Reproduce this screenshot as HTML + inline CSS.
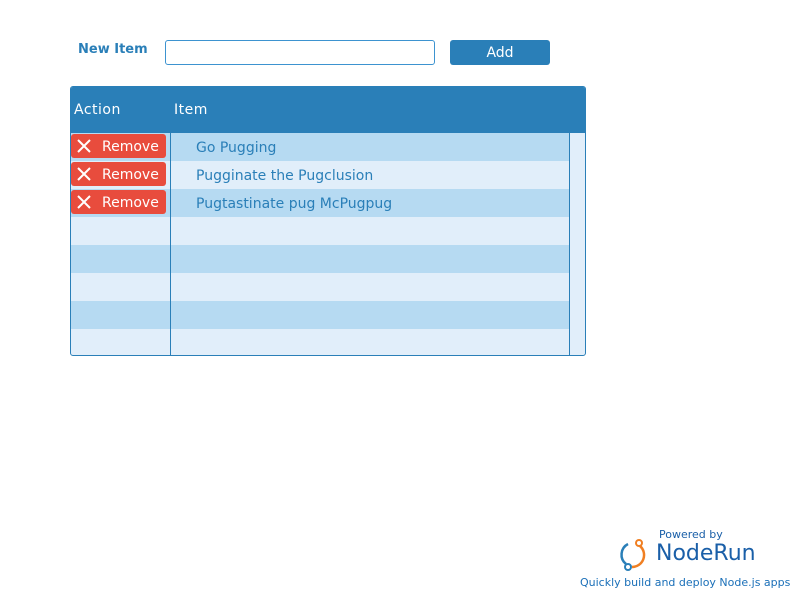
<!DOCTYPE html>
<html><head><style>
body{margin:0;width:800px;height:600px;background:#fff;font-family:"DejaVu Sans","Liberation Sans",sans-serif;position:relative;overflow:hidden}
.a{position:absolute}
.lbl{left:78px;top:42px;font-size:13px;font-weight:bold;color:#2a7fb8}
.inp{left:165px;top:40px;width:268px;height:23px;border:1px solid #3d93d0;border-radius:3px}
.add{left:450px;top:40px;width:100px;height:25px;background:#2a7fb8;border-radius:3px;color:#fff;font-size:14px;text-align:center;line-height:26px}
.tbl{left:70px;top:86px;width:514px;height:268px;border:1px solid #2a7fb8;border-radius:3px;overflow:hidden;background:#e1eefa}
.hd{left:0;top:0;width:516px;height:46px;background:#2a7fb8;color:#fff;font-size:14px;letter-spacing:0.5px}
.row{left:0;width:499px;height:28px}
.d{background:#b6daf2}
.vl{top:46px;width:1px;height:222px;background:#2a7fb8}
.btn{left:0;width:95px;height:24px;background:#e84c3d;border-radius:3px;color:#fff;font-size:14px;line-height:26px}
.btn span{position:absolute;left:31px}
.txt{left:125px;font-size:14px;color:#2a7fb8;line-height:30px}
</style></head><body>
<div class="a lbl">New Item</div>
<div class="a inp"></div>
<div class="a add">Add</div>
<div class="a tbl">
 <div class="a hd"><span class="a" style="left:3px;top:15px">Action</span><span class="a" style="left:103px;top:15px">Item</span></div>
 <div class="a row d" style="top:46px"></div>
 <div class="a row d" style="top:102px"></div>
 <div class="a row d" style="top:158px"></div>
 <div class="a row d" style="top:214px"></div>
 <div class="a vl" style="left:99px"></div>
 <div class="a vl" style="left:498px"></div>
 <div class="a btn" style="top:47px"><svg class="a" style="left:6px;top:5px" width="14" height="14"><path d="M1 1L13 13M13 1L1 13" stroke="#fff" stroke-width="2"/></svg><span>Remove</span></div>
 <div class="a btn" style="top:75px"><svg class="a" style="left:6px;top:5px" width="14" height="14"><path d="M1 1L13 13M13 1L1 13" stroke="#fff" stroke-width="2"/></svg><span>Remove</span></div>
 <div class="a btn" style="top:103px"><svg class="a" style="left:6px;top:5px" width="14" height="14"><path d="M1 1L13 13M13 1L1 13" stroke="#fff" stroke-width="2"/></svg><span>Remove</span></div>
 <div class="a txt" style="top:46px">Go Pugging</div>
 <div class="a txt" style="top:74px">Pugginate the Pugclusion</div>
 <div class="a txt" style="top:102px">Pugtastinate pug McPugpug</div>
</div>
<div class="a" style="left:659px;top:528px;font-size:11px;color:#1a5fa8">Powered by</div>
<svg class="a" style="left:618px;top:536px" width="34" height="36"><path d="M10 8A12 12 0 0 0 8 28" stroke="#2a7fb8" stroke-width="2.5" fill="none"/><path d="M22 10A12 12 0 0 1 14 31" stroke="#f07f22" stroke-width="2.5" fill="none"/><circle cx="21" cy="7" r="3" fill="#fff" stroke="#f07f22" stroke-width="2"/><circle cx="10" cy="31" r="3" fill="#fff" stroke="#2a7fb8" stroke-width="2"/></svg>
<div class="a" style="left:656px;top:541px;font-size:22px;color:#1a5fa8">NodeRun</div>
<div class="a" style="left:580px;top:576px;font-size:11px;color:#1a6fb8">Quickly build and deploy Node.js apps</div>
</body></html>
